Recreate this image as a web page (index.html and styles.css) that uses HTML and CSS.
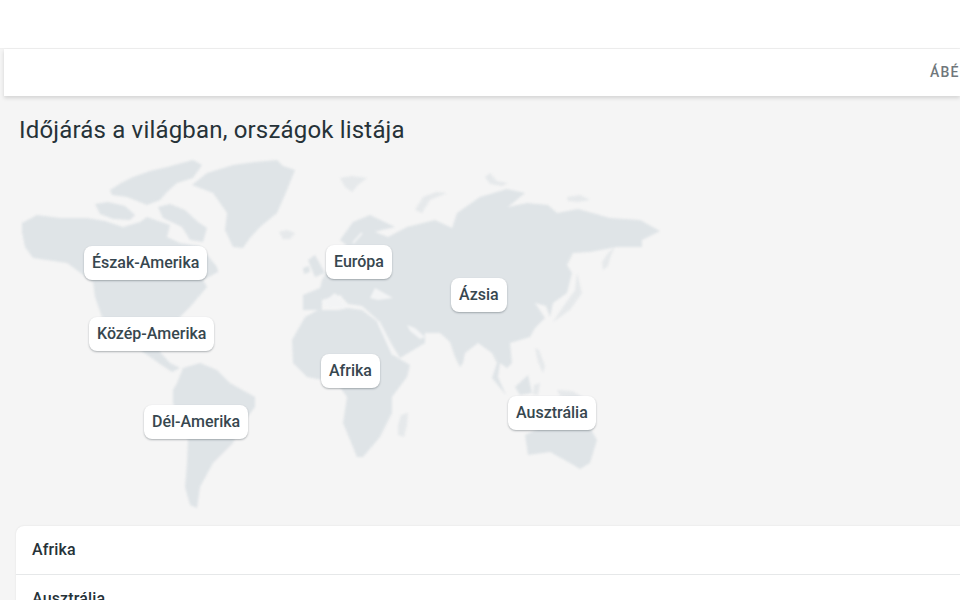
FILE: index.html
```html
<!DOCTYPE html>
<html lang="hu">
<head>
<meta charset="utf-8">
<title>Időjárás a világban</title>
<link rel="stylesheet" href="styles.css">
</head>
<body>
<header class="topbar"></header>
<nav class="tabbar"><a class="tab">ÁBÉCÉ</a></nav>
<main class="content">
  <h1 class="title">Időjárás a világban, országok listája</h1>
  <section class="stage">
    <svg class="map" viewBox="0 150 680 370" aria-hidden="true">
      <g class="land">
        <path d="M110 190 121 183 133 177 150 171 167 167 193 160 202 165 193 178 177 183 167 192 160 200 147 205 127 197 112 195Z"/>
        <path d="M192 185 207 173 233 165 255 162 277 160 283 166 295 170 287 190 277 213 260 227 250 238 243 248 233 247 225 230 227 213 213 193Z"/>
        <path d="M95 204 108 202 125 206 135 215 130 220 113 219 100 214Z"/>
        <path d="M158 207 170 204 185 210 198 222 207 228 203 242 190 240 182 227 163 218Z"/>
        <path d="M22 223 37 215 60 218 87 218 105 221 123 227 140 222 147 217 158 221 170 225 167 237 180 243 200 246 217 267 218 272 203 280 207 287 190 307 180 317 170 335 160 345 160 352 170 363 180 368 172 372 160 364 143 352 125 335 102 317 95 297 93 282 67 263 33 258 25 247 22 232Z"/>
        <path d="M177 383 183 368 200 363 217 370 230 383 255 397 255 407 243 423 233 443 213 463 200 487 197 508 190 505 185 487 187 463 188 440 173 403 173 390Z"/>
        <path d="M292 340 305 317 318 310 338 310 348 308 362 310 378 322 385 335 393 355 410 365 407 377 392 397 392 413 380 437 363 457 357 457 343 423 347 397 337 383 307 377 293 363Z"/>
        <path d="M308 260 315 255 325 273 315 277 312 270Z"/>
        <path d="M303 268 309 266 310 272 304 274Z"/>
        <path d="M340 240 353 222 370 215 395 227 382 230 375 232 388 237 407 227 435 220 452 228 457 213 480 197 507 189 525 193 508 207 527 203 548 205 557 213 578 209 610 218 640 220 660 231 642 240 642 247 617 247 590 252 573 253 567 265 572 273 567 293 553 303 550 317 546 306 535 303 545 318 535 328 530 337 510 343 512 363 507 368 500 363 498 377 506 395 492 378 497 363 492 353 478 343 465 353 463 363 460 367 455 357 450 342 440 333 425 333 425 343 400 358 392 345 380 322 362 306 348 304 340 295 322 300 322 310 303 310 303 295 320 288 322 280 332 262 348 258 346 245Z"/>
        <path d="M515 387 528 375 532 393 520 395Z"/>
        <path d="M525 435 540 428 590 428 597 440 590 463 580 469 570 463 550 452 528 455Z"/>
      </g>
      <g class="land-faint">
        <path d="M279 232 287 230 295 233 290 239 283 239Z"/>
        <path d="M401 415 408 413 407 425 404 437 398 435 398 425Z"/>
        <path d="M535 348 539 350 545 366 543 373 538 362Z"/>
        <path d="M534 385 540 383 538 395 533 394Z"/>
        <path d="M557 390 572 391 583 397 575 400 560 396Z"/>
        <path d="M615 247 608 253 602 262 603 270 608 266 611 255Z"/>
        <path d="M577 273 582 293 570 310 553 322 563 307 575 290Z"/>
        <path d="M340 178 352 176 367 178 358 185 352 192 345 187Z"/>
        <path d="M415 210 423 197 436 192 447 193 430 200 422 213Z"/>
        <path d="M485 177 490 173 497 181 508 183 502 186 490 184Z"/>
        <path d="M567 197 580 195 590 200 578 202 568 201Z"/>
      </g>
      <g class="sea">
        <path d="M370 298 375 288 393 298 378 300Z"/>
        <path d="M407 325 415 328 425 337 420 339 410 331Z"/>
        <path d="M322 303 335 293 348 308 330 308Z"/>
        <path class="strait" d="M378 322 393 355"/>
        <path class="strait" d="M362 233 353 243"/>
      </g>
    </svg>
    <a class="pin pin-na">Észak-Amerika</a>
    <a class="pin pin-ca">Közép-Amerika</a>
    <a class="pin pin-sa">Dél-Amerika</a>
    <a class="pin pin-eu">Európa</a>
    <a class="pin pin-as">Ázsia</a>
    <a class="pin pin-af">Afrika</a>
    <a class="pin pin-au">Ausztrália</a>
  </section>
  <ul class="list">
    <li class="row">Afrika</li>
    <li class="row">Ausztrália</li>
  </ul>
</main>
</body>
</html>
```
FILE: styles.css
```css
html, body {
  margin: 0;
  height: 600px;
  overflow: hidden;
}
body {
  background: #f5f5f5;
  font-family: Roboto, "Liberation Sans", sans-serif;
  color: #263238;
}
.topbar {
  height: 48px;
  background: #fff;
  border-bottom: 1px solid #f0f0f0;
}
.tabbar {
  margin-left: 4px;
  height: 47px;
  background: #fff;
  box-shadow: 0 2px 4px rgba(0, 0, 0, .14);
  display: flex;
  align-items: center;
  padding: 0 0 2px 926px;
  box-sizing: border-box;
  position: relative;
  white-space: nowrap;
}
.tab {
  font-size: 14px;
  font-weight: 500;
  letter-spacing: 1.25px;
  color: #70777b;
}
.title {
  margin: 0;
  height: 54px;
  padding: 20px 0 0 19px;
  box-sizing: border-box;
  font-size: 24px;
  line-height: 28px;
  font-weight: 400;
  letter-spacing: .18px;
  color: #263238;
}
.stage {
  position: relative;
  height: 376px;
}
.map {
  display: block;
  width: 680px;
  height: 370px;
  filter: blur(1px);
}
.land { fill: #dfe4e7; }
.land-faint { fill: #e6e9eb; }
.sea { fill: #f3f4f5; }
.strait {
  fill: none;
  stroke: #f3f4f5;
  stroke-width: 2;
}
.pin {
  position: absolute;
  display: flex;
  align-items: center;
  height: 34px;
  padding: 0 8px 2px;
  box-sizing: border-box;
  background: #fff;
  border-radius: 8px;
  box-shadow: 0 1px 2px rgba(38, 50, 56, .35);
  font-size: 16px;
  font-weight: 500;
  color: #37474f;
  white-space: nowrap;
}
.pin-na { left: 84px; top: 96px; }
.pin-ca { left: 89px; top: 167px; }
.pin-sa { left: 144px; top: 255px; }
.pin-eu { left: 326px; top: 95px; }
.pin-as { left: 451px; top: 128px; }
.pin-af { left: 321px; top: 204px; }
.pin-au { left: 508px; top: 246px; }
.list {
  list-style: none;
  margin: 0 0 0 16px;
  padding: 0;
  width: 960px;
  background: #fff;
  border-radius: 8px 0 0 0;
  box-shadow: 0 0 2px rgba(0, 0, 0, .1);
}
.row {
  height: 49px;
  padding: 0 0 1px 16px;
  box-sizing: border-box;
  display: flex;
  align-items: center;
  border-bottom: 1px solid #e6e8e9;
  font-size: 16px;
  font-weight: 500;
  letter-spacing: .15px;
  color: #263238;
}
```
